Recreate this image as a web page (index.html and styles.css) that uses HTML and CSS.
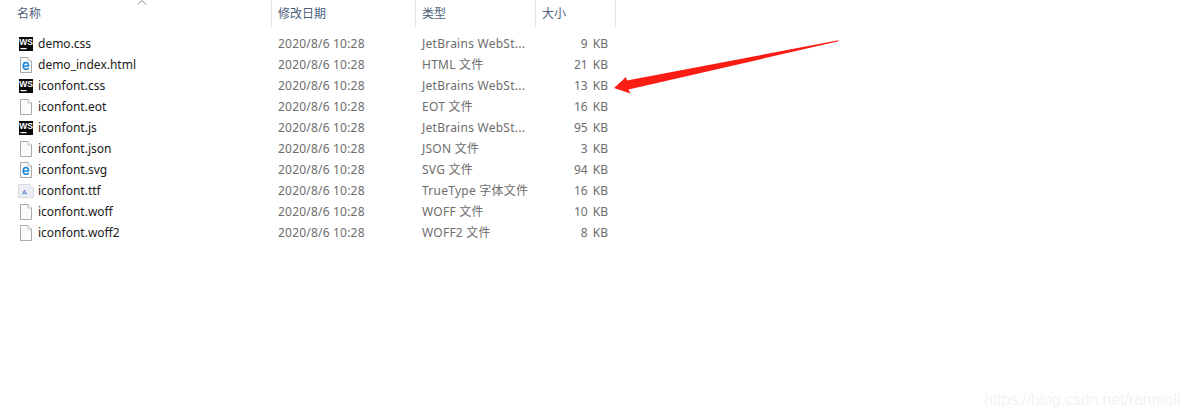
FILE: index.html
```html
<!DOCTYPE html>
<html lang="en">
<head>
    <meta charset="UTF-8">
    <title>iconfont</title>
    <link rel="stylesheet" href="styles.css">
</head>
<body>
    <svg width="0" height="0" class="defs">
        <symbol id="blank" viewBox="0 0 14 16">
            <path d="M1.5 .5H9L12.5 4V15.5H1.5Z" fill="#fbfbfb" stroke="#a9a9a9"/>
            <path d="M9 .5V4H12.5" fill="#fff" stroke="#bdbdbd"/>
        </symbol>
        <symbol id="ie" viewBox="0 0 14 16">
            <path d="M1.5 .5H9L12.5 4V15.5H1.5Z" fill="#fbfbfb" stroke="#a9a9a9"/>
            <path d="M9 .5V4H12.5" fill="#fff" stroke="#bdbdbd"/>
            <path d="M4.6 9H9.6C9.7 6.8 8.6 5.6 7 5.6 5.3 5.6 4.2 7 4.2 8.9 4.2 10.9 5.4 12.2 7.1 12.2 8.2 12.2 9 11.8 9.5 11" fill="none" stroke="#1683d8" stroke-width="1.5"/>
        </symbol>
        <symbol id="font" viewBox="0 0 16 14">
            <path d="M.5 .5H12L15.5 4V13.5H.5Z" fill="#eceef4" stroke="#d8dae0"/>
            <path d="M12 .5V4H15.5" fill="#fff" stroke="#d8dae0"/>
            <path d="M4.5 10.5L6.5 6 8.500 10.500M5.2 9.2H7.8" fill="none" stroke="#5c82d0"/>
        </symbol>
    </svg>

    <div class="head">
        <div class="col col-name">名称<svg class="sort" width="10" height="5" viewBox="0 0 10 5"><path d="M1 4.5L5 .5 9 4.5" fill="none" stroke="#8a8a8a"/></svg></div>
        <div class="col col-date">修改日期</div>
        <div class="col col-type">类型</div>
        <div class="col col-size">大小</div>
    </div>

    <div class="list">
        <div class="row"><div class="name"><svg class="icon-ws" viewBox="0 0 14 14"><rect width="14" height="14" fill="#0a0a0a"/><text x="7" y="8" text-anchor="middle" class="ws-text">WS</text><rect x="1.5" y="11" width="6" height="1.2" fill="#fff"/></svg>demo.css</div><div class="date">2020/8/6 10:28</div><div class="type">JetBrains WebSt...</div><div class="size">9 KB</div></div>
        <div class="row"><div class="name"><svg class="icon-doc"><use href="#ie"/></svg>demo_index.html</div><div class="date">2020/8/6 10:28</div><div class="type">HTML 文件</div><div class="size">21 KB</div></div>
        <div class="row"><div class="name"><svg class="icon-ws" viewBox="0 0 14 14"><rect width="14" height="14" fill="#0a0a0a"/><text x="7" y="8" text-anchor="middle" class="ws-text">WS</text><rect x="1.5" y="11" width="6" height="1.2" fill="#fff"/></svg>iconfont.css</div><div class="date">2020/8/6 10:28</div><div class="type">JetBrains WebSt...</div><div class="size">13 KB</div></div>
        <div class="row"><div class="name"><svg class="icon-doc"><use href="#blank"/></svg>iconfont.eot</div><div class="date">2020/8/6 10:28</div><div class="type">EOT 文件</div><div class="size">16 KB</div></div>
        <div class="row"><div class="name"><svg class="icon-ws" viewBox="0 0 14 14"><rect width="14" height="14" fill="#0a0a0a"/><text x="7" y="8" text-anchor="middle" class="ws-text">WS</text><rect x="1.5" y="11" width="6" height="1.2" fill="#fff"/></svg>iconfont.js</div><div class="date">2020/8/6 10:28</div><div class="type">JetBrains WebSt...</div><div class="size">95 KB</div></div>
        <div class="row"><div class="name"><svg class="icon-doc"><use href="#blank"/></svg>iconfont.json</div><div class="date">2020/8/6 10:28</div><div class="type">JSON 文件</div><div class="size">3 KB</div></div>
        <div class="row"><div class="name"><svg class="icon-doc"><use href="#ie"/></svg>iconfont.svg</div><div class="date">2020/8/6 10:28</div><div class="type">SVG 文件</div><div class="size">94 KB</div></div>
        <div class="row"><div class="name"><svg class="icon-font"><use href="#font"/></svg>iconfont.ttf</div><div class="date">2020/8/6 10:28</div><div class="type">TrueType 字体文件</div><div class="size">16 KB</div></div>
        <div class="row"><div class="name"><svg class="icon-doc"><use href="#blank"/></svg>iconfont.woff</div><div class="date">2020/8/6 10:28</div><div class="type">WOFF 文件</div><div class="size">10 KB</div></div>
        <div class="row"><div class="name"><svg class="icon-doc"><use href="#blank"/></svg>iconfont.woff2</div><div class="date">2020/8/6 10:28</div><div class="type">WOFF2 文件</div><div class="size">8 KB</div></div>
    </div>

    <svg class="arrow" width="240" height="70" viewBox="610 35 240 70">
        <path d="M838.5 40.3L627 80.5 626 77 614 88 630.5 93.5 628.5 89.5 838.5 41.3Z" fill="#fb1c14"/>
    </svg>
    <div class="watermark">https://blog.csdn.net/ranmoli</div>
</body>
</html>
```

FILE: styles.css
```css
html, body {
    height: 100%;
}
body {
    font-family: "Noto Sans", "Noto Sans CJK SC", sans-serif;
    font-size: 12px;
    background-color: white;
    margin: 0;
    position: relative;
    overflow: hidden;
}
.defs {
    display: block;
    height: 0;
}
.ws-text {
    font-family: "Liberation Sans", sans-serif;
    font-size: 8.5px;
    font-weight: bold;
    fill: #fff;
}
.head {
    display: flex;
    height: 27px;
    color: #4c607a;
}
.col {
    border-right: 1px solid #e5e5e5;
    padding-left: 6px;
    line-height: 27px;
    position: relative;
    box-sizing: border-box;
}
.col-name {
    width: 272px;
    padding-left: 17px;
}
.col-date {
    width: 144px;
}
.col-type {
    width: 120px;
}
.col-size {
    width: 80px;
}
.sort {
    position: absolute;
    left: 137px;
    top: 0;
}
.list {
    padding-top: 6px;
}
.row {
    display: flex;
    height: 21px;
    line-height: 21px;
    color: #6d6d6d;
}
.name {
    display: flex;
    align-items: center;
    width: 272px;
    padding-left: 18px;
    box-sizing: border-box;
    color: #1a1a1a;
}
.icon-ws {
    width: 14px;
    height: 14px;
    margin: 0 5px 0 1px;
}
.icon-doc {
    width: 14px;
    height: 16px;
    margin: 0 5px 0 1px;
}
.icon-font {
    width: 16px;
    height: 14px;
    margin-right: 4px;
}
.date {
    width: 144px;
    padding-left: 6px;
    box-sizing: border-box;
    letter-spacing: 0.2px;
}
.type {
    width: 120px;
    padding-left: 6px;
    box-sizing: border-box;
    letter-spacing: 0.25px;
}
.size {
    width: 72px;
    text-align: right;
    word-spacing: 2px;
}
.arrow {
    position: absolute;
    left: 610px;
    top: 35px;
}
.watermark {
    position: absolute;
    left: 984px;
    top: 391px;
    font-family: "Liberation Sans", sans-serif;
    font-size: 15.7px;
    color: #f3f3f3;
}
```
